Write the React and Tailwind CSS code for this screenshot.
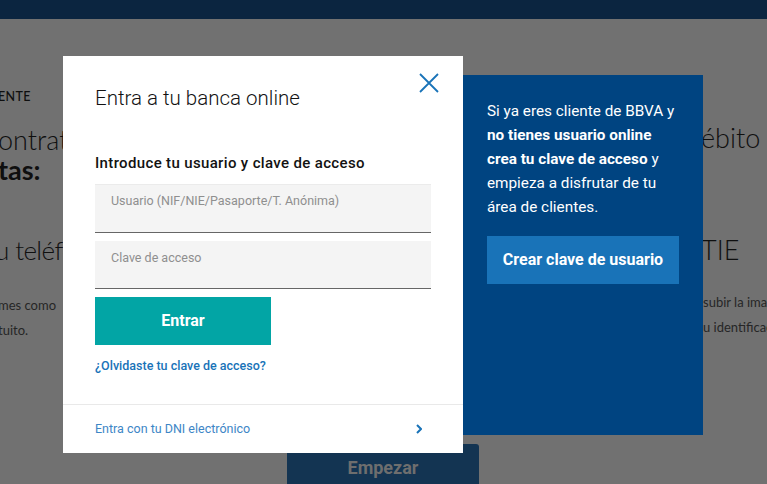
import React from 'react';

const App = () => {
  return (
    <div className="relative w-[767px] h-[484px] overflow-hidden bg-[#717171] font-['Lato',sans-serif]">
      {/* Top bar */}
      <div className="h-[19px] bg-[#0b2540]" />

      {/* Page behind the overlay */}
      <div className="flex justify-between">
        <div className="-ml-[2px] pt-[70px] text-[#0f0f0f]">
          <p className="text-[12.5px] font-medium leading-4 tracking-wide">ENTE</p>
          <p className="mt-[20px] text-[27px] font-light leading-[30px]">ontratar</p>
          <p className="text-[27px] font-bold leading-[30px]">tas:</p>
          <p className="-ml-[3px] mt-[50px] text-[26px] font-light leading-[30px] tracking-[-0.6px]">u teléfono</p>
          <p className="mt-[28px] text-[13px] leading-[25px] text-[#262626]">mes como</p>
          <p className="text-[13px] leading-[25px] text-[#262626]">tuito.</p>
        </div>
        <div className="w-[64px] overflow-hidden whitespace-nowrap pt-[104px] text-[#0f0f0f]">
          <p className="-ml-[2px] text-[27px] font-light leading-[30px]">ébito</p>
          <p className="-ml-[2px] mt-[82px] text-[27px] font-light leading-[30px]">TIE</p>
          <p className="mt-[25px] text-[13px] leading-[25px] text-[#262626]">subir la imagen</p>
          <p className="text-[13px] leading-[25px] text-[#262626]">u identificación</p>
        </div>
      </div>

      <div className="absolute left-[287px] top-[444px] flex h-[48px] w-[192px] items-start justify-center rounded-t-[3px] bg-[#133452] pt-[10px]">
        <span className="text-[18px] font-bold text-[#6e6e6e] font-['Roboto',sans-serif]">Empezar</span>
      </div>

      {/* Login dialog */}
      <div className="absolute left-[63px] top-[56px] flex items-start font-['Roboto',sans-serif]">
        <div className="relative flex h-[397px] w-[400px] flex-col bg-white">
          <button className="absolute right-[24px] top-[17px] text-[#1973b8]">
            <svg width="20" height="20" viewBox="0 0 20 20" fill="none" stroke="currentColor" strokeWidth="1.8">
              <path d="M1 1L19 19M19 1L1 19" />
            </svg>
          </button>

          <div className="px-8 pt-[30px]">
            <h2 className="text-[20.5px] font-light leading-6 text-[#121212]">Entra a tu banca online</h2>
            <p className="mt-[42px] text-[15px] font-medium leading-[22px] tracking-[0.35px] text-[#121212]">
              Introduce tu usuario y clave de acceso
            </p>

            <div className="mt-[10px] h-[49px] border-t border-[#ebebeb] border-b border-b-[#666666] bg-[#f4f4f4] px-4 pt-[3px]">
              <span className="text-[12.5px] text-[#8f8f8f]">Usuario (NIF/NIE/Pasaporte/T. Anónima)</span>
            </div>
            <div className="mt-[8px] h-[48px] border-b border-[#666666] bg-[#f4f4f4] px-4 pt-[4px]">
              <span className="text-[12.5px] text-[#8f8f8f]">Clave de acceso</span>
            </div>

            <button className="mt-[8px] flex h-[48px] w-[176px] items-center justify-center bg-[#02a5a5] text-[16px] font-bold text-white">
              Entrar
            </button>

            <p className="mt-[12px] text-[12.5px] font-medium leading-[18px] text-[#1973b8]">
              ¿Olvidaste tu clave de acceso?
            </p>
          </div>

          <div className="mt-auto flex h-[49px] items-center justify-between border-t border-[#e9e9e9] pl-8 pr-[41px]">
            <span className="text-[12.5px] text-[#3d86c6]">Entra con tu DNI electrónico</span>
            <svg width="6" height="10" viewBox="0 0 6 10" fill="none" stroke="#1973b8" strokeWidth="2">
              <path d="M1 1l4 4-4 4" />
            </svg>
          </div>
        </div>

        <div className="mt-[19px] h-[360px] w-[240px] bg-[#004481] px-6 pt-[24px] text-white">
          <p className="text-[15.3px] leading-6">
            Si ya eres cliente de BBVA y<br />
            <span className="font-bold">no tienes usuario online</span>
            <br />
            <span className="font-bold">crea tu clave de acceso</span> y<br />
            empieza a disfrutar de tu<br />
            área de clientes.
          </p>
          <button className="mt-[17px] flex h-[48px] w-[192px] items-center justify-center bg-[#1973b8] text-[16px] font-bold text-white">
            Crear clave de usuario
          </button>
        </div>
      </div>
    </div>
  );
};

export default App;
